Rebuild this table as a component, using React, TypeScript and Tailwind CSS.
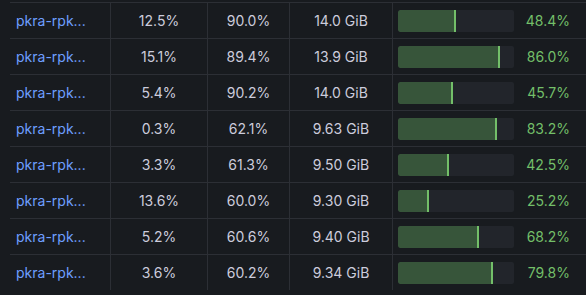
const rows = [
  { cpu: '12.5%', mem: '90.0%', size: '14.0 GiB', used: 48.4 },
  { cpu: '15.1%', mem: '89.4%', size: '13.9 GiB', used: 86.0 },
  { cpu: '5.4%', mem: '90.2%', size: '14.0 GiB', used: 45.7 },
  { cpu: '0.3%', mem: '62.1%', size: '9.63 GiB', used: 83.2 },
  { cpu: '3.3%', mem: '61.3%', size: '9.50 GiB', used: 42.5 },
  { cpu: '13.6%', mem: '60.0%', size: '9.30 GiB', used: 25.2 },
  { cpu: '5.2%', mem: '60.6%', size: '9.40 GiB', used: 68.2 },
  { cpu: '3.6%', mem: '60.2%', size: '9.34 GiB', used: 79.8 },
];

function Gauge({ value }: { value: number }) {
  return (
    <div className="flex items-center h-full pl-[5px]">
      <div className="relative w-[116px] h-[22px] rounded-[2px] bg-[#22252b] overflow-hidden">
        {/* filled part, bright edge drawn just past the fill */}
        <div
          className="box-content h-full bg-[#37553a] border-r-2 border-[#73bf69] rounded-l-[2px]"
          style={{ width: `${value}%` }}
        />
      </div>
      <div className="w-[56px] text-right text-[#73bf69]">{value.toFixed(1)}%</div>
    </div>
  );
}

export default function App() {
  return (
    <div
      className="w-[586px] h-[295px] bg-[#181b1f] pl-[10px] pt-[2px] text-[14px] text-[#ccccdc] overflow-hidden"
      style={{ fontFamily: 'Inter, "Liberation Sans", sans-serif' }}
    >
      {rows.map((r, i) => (
        <div
          key={i}
          className="flex h-[36px] border-t border-[#2c2f35]"
        >
          <div className="w-[101px] border-r border-[#2c2f35] flex items-center pl-[6px] text-[#6e9fff]">
            pkra-rpk...
          </div>
          <div className="w-[97px] border-r border-[#2c2f35] flex items-center justify-center">{r.cpu}</div>
          <div className="w-[82px] border-r border-[#2c2f35] flex items-center justify-center">{r.mem}</div>
          <div className="w-[103px] border-r border-[#2c2f35] flex items-center justify-center">{r.size}</div>
          <div className="flex-1">
            <Gauge value={r.used} />
          </div>
        </div>
      ))}
    </div>
  );
}
